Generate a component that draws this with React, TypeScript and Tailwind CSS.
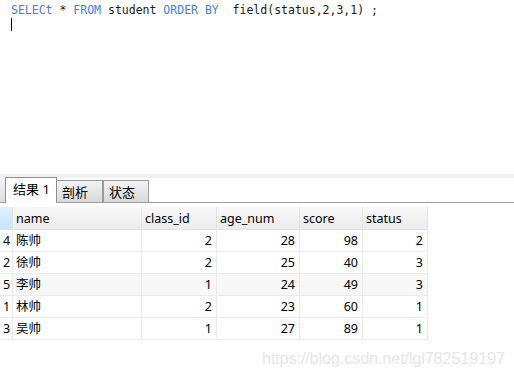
const rows = [
  { n: '4', name: '陈帅', classId: 2, age: 28, score: 98, status: 2 },
  { n: '2', name: '徐帅', classId: 2, age: 25, score: 40, status: 3 },
  { n: '5', name: '李帅', classId: 1, age: 24, score: 49, status: 3 },
  { n: '1', name: '林帅', classId: 2, age: 23, score: 60, status: 1 },
  { n: '3', name: '吴帅', classId: 1, age: 27, score: 89, status: 1 },
];

const ui = { fontFamily: '"Noto Sans", "Noto Sans CJK SC", sans-serif' };

const App = () => {
  return (
    <div className="w-[514px] h-[375px] bg-white overflow-hidden relative" style={ui}>
      {/* SQL editor */}
      <div className="h-[174px] pl-[11px] pt-[3px] font-['DejaVu_Sans_Mono',monospace] text-[11.5px] leading-[14px] text-[#1a1a1a] whitespace-pre">
        <div>
          <span className="text-[#3f7cf7]">SELECt</span> * <span className="text-[#3f7cf7]">FROM</span> student{' '}
          <span className="text-[#3f7cf7]">ORDER BY</span>  field(status,2,3,1) ;
        </div>
        <div className="w-px h-[13px] bg-black mt-[1px]" />
      </div>

      <div className="h-[4px] bg-[#f0f0f0]" />

      {/* tabs */}
      <div className="h-[25px] flex items-end border-b border-[#a0a0a0] text-[13px] text-black">
        <div className="w-[5px] h-[22px] bg-gradient-to-b from-[#f2f2f2] to-[#dedede]" />
        <div className="w-[52px] h-[26px] -mb-px bg-white border border-b-0 border-[#8f8f8f] pl-[7px] leading-[23px] z-10">
          结果 1
        </div>
        <div className="w-[47px] h-[22px] -ml-px bg-gradient-to-b from-[#f3f3f3] to-[#d9d9d9] border border-b-0 border-[#9a9a9a] pl-[5px] leading-[22px]">
          剖析
        </div>
        <div className="w-[46px] h-[22px] bg-gradient-to-b from-[#f3f3f3] to-[#d9d9d9] border border-b-0 border-[#9a9a9a] pl-[5px] leading-[22px]">
          状态
        </div>
      </div>

      {/* result grid */}
      <div className="mt-[4px] grid grid-cols-[13px_129px_75px_83px_63px_65px] w-[428px] text-[12.5px] text-black">
        <div className="h-[23px] bg-gradient-to-b from-[#e0f1fd] to-[#c6e4fa] border-b border-r border-[#e3e3e3]" />
        {['name', 'class_id', 'age_num', 'score', 'status'].map((h) => (
          <div
            key={h}
            className="h-[23px] pl-[3px] leading-[24px] bg-gradient-to-b from-[#f7f7f7] to-[#ececec] border-b border-r border-[#e3e3e3]"
          >
            {h}
          </div>
        ))}
        {rows.map((r, i) => {
          const bg = i === 2 ? 'bg-[#f7f7f7]' : 'bg-white';
          const cell = `h-[22px] leading-[22px] border-b border-r border-[#ebebeb] ${bg}`;
          return [
            <div key={`${r.n}-n`} className="h-[22px] leading-[22px] pl-[3px] bg-white border-b border-r border-[#ebebeb]">
              {r.n}
            </div>,
            <div key={`${r.n}-name`} className={`${cell} pl-[3px]`}>{r.name}</div>,
            <div key={`${r.n}-c`} className={`${cell} text-right pr-[4px]`}>{r.classId}</div>,
            <div key={`${r.n}-a`} className={`${cell} text-right pr-[4px]`}>{r.age}</div>,
            <div key={`${r.n}-s`} className={`${cell} text-right pr-[4px]`}>{r.score}</div>,
            <div key={`${r.n}-st`} className={`${cell} text-right pr-[4px]`}>{r.status}</div>,
          ];
        })}
      </div>

      {/* watermark */}
      <div className="absolute left-[262px] top-[346px] text-[16.4px] text-[#e6e6e6] font-['Liberation_Sans',sans-serif] tracking-[-0.2px]">
        https://blog.csdn.net/lgl782519197
      </div>
    </div>
  );
};

export default App;
